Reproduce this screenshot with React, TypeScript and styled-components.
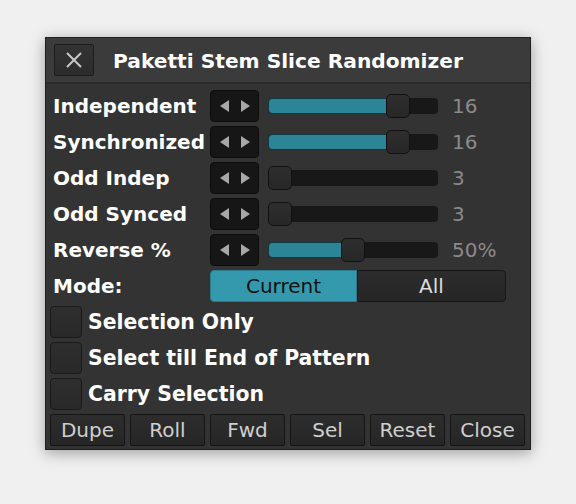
import React from 'react'
import styled, { createGlobalStyle } from 'styled-components'

const GlobalStyle = createGlobalStyle`
  html, body {
    margin: 0;
    padding: 0;
    background: #f0f0f0;
  }
  body {
    font-family: 'DejaVu Sans', 'Liberation Sans', sans-serif;
  }
`

const Page = styled.div`
  padding: 37px 0 0 45px;
  height: 504px;
  box-sizing: border-box;
`

const Window = styled.div`
  width: 486px;
  height: 413px;
  box-sizing: border-box;
  background: #333333;
  border: 1px solid #1f1f1f;
  box-shadow: 0 3px 14px rgba(0, 0, 0, 0.35);
  display: flex;
  flex-direction: column;
`

const TitleBar = styled.div`
  height: 46px;
  box-sizing: border-box;
  background: #3b3b3b;
  border-bottom: 2px solid #2a2a2a;
  display: flex;
  align-items: center;
  padding: 0 0 0 8px;
  gap: 19px;
`

const CloseBox = styled.div`
  width: 40px;
  height: 32px;
  box-sizing: border-box;
  background: linear-gradient(#333, #2c2c2c);
  border: 1px solid #1c1c1c;
  border-radius: 2px;
  display: flex;
  align-items: center;
  justify-content: center;
`

const Title = styled.div`
  color: #fff;
  font-weight: bold;
  font-size: 20.2px;
  margin-top: 1px;
`

const Content = styled.div`
  display: flex;
  flex-direction: column;
  gap: 4px;
  padding: 6px 4px 0 4px;
`

const Row = styled.div`
  display: flex;
  align-items: center;
  height: 32px;
`

const Label = styled.div`
  width: 160px;
  padding-left: 3px;
  box-sizing: border-box;
  color: #fff;
  font-weight: bold;
  font-size: 20px;
  white-space: nowrap;
`

const ArrowBox = styled.div`
  width: 49px;
  height: 32px;
  box-sizing: border-box;
  background: #161616;
  border: 1px solid #0c0c0c;
  border-radius: 4px;
  display: flex;
  align-items: center;
  justify-content: center;
  gap: 12px;
`

const Track = styled.div`
  position: relative;
  width: 170px;
  height: 16px;
  margin-left: 9px;
  background: #181818;
  border-radius: 4px;
`

const Fill = styled.div`
  position: absolute;
  left: 0;
  top: 0;
  bottom: 0;
  background: #2b8596;
  border: 1px solid #123a42;
  box-sizing: border-box;
  border-radius: 4px 0 0 4px;
`

const Thumb = styled.div`
  position: absolute;
  top: -4px;
  width: 24px;
  height: 24px;
  box-sizing: border-box;
  background: linear-gradient(#2e2e2e, #272727);
  border: 1px solid #111;
  border-radius: 5px;
`

const Value = styled.div`
  margin-left: 14px;
  color: #8a8a8a;
  font-size: 20px;
`

const Segmented = styled.div`
  display: flex;
  width: 296px;
  height: 32px;
`

const Segment = styled.div<{ $active?: boolean }>`
  flex: ${(p) => (p.$active ? '0 0 147px' : '1')};
  box-sizing: border-box;
  display: flex;
  align-items: center;
  justify-content: center;
  font-size: 20px;
  color: ${(p) => (p.$active ? '#111' : '#ddd')};
  background: ${(p) => (p.$active ? '#3499ac' : 'linear-gradient(#2c2c2c, #262626)')};
  border: 1px solid ${(p) => (p.$active ? '#2a7b8b' : '#161616')};
  border-radius: ${(p) => (p.$active ? '4px 0 0 4px' : '0 4px 4px 0')};
`

const CheckRow = styled.div`
  display: flex;
  align-items: center;
  height: 32px;
  gap: 6px;
`

const CheckBox = styled.div`
  width: 32px;
  height: 32px;
  box-sizing: border-box;
  background: linear-gradient(#2e2e2e, #292929);
  border: 1px solid #1a1a1a;
  border-radius: 4px;
`

const CheckLabel = styled.div`
  color: #fff;
  font-weight: bold;
  font-size: 20.4px;
`

const ButtonRow = styled.div`
  display: flex;
  gap: 5px;
`

const Button = styled.div`
  width: 75px;
  height: 32px;
  box-sizing: border-box;
  background: linear-gradient(#2d2d2d, #262626);
  border: 1px solid #151515;
  border-radius: 2px;
  display: flex;
  align-items: center;
  justify-content: center;
  color: #cfcfcf;
  font-size: 20px;
`

const Arrows = () => (
  <>
    <svg width="9" height="12" viewBox="0 0 9 12">
      <polygon points="9,0 9,12 0,6" fill="#a8a8a8" />
    </svg>
    <svg width="9" height="12" viewBox="0 0 9 12">
      <polygon points="0,0 0,12 9,6" fill="#a8a8a8" />
    </svg>
  </>
)

const sliders = [
  { label: 'Independent', frac: 0.81, value: '16' },
  { label: 'Synchronized', frac: 0.81, value: '16' },
  { label: 'Odd Indep', frac: 0, value: '3' },
  { label: 'Odd Synced', frac: 0, value: '3' },
  { label: 'Reverse %', frac: 0.5, value: '50%' },
]

const checks = ['Selection Only', 'Select till End of Pattern', 'Carry Selection']
const buttons = ['Dupe', 'Roll', 'Fwd', 'Sel', 'Reset', 'Close']

const App: React.FC = () => {
  return (
    <Page>
      <GlobalStyle />
      <Window>
        <TitleBar>
          <CloseBox>
            <svg width="18" height="18" viewBox="0 0 18 18">
              <path d="M2 2 L16 16 M16 2 L2 16" stroke="#c8c8c8" strokeWidth="2" />
            </svg>
          </CloseBox>
          <Title>Paketti Stem Slice Randomizer</Title>
        </TitleBar>
        <Content>
          {sliders.map((s) => {
            const left = Math.round(s.frac * 146)
            return (
              <Row key={s.label}>
                <Label>{s.label}</Label>
                <ArrowBox>
                  <Arrows />
                </ArrowBox>
                <Track>
                  {left > 0 && <Fill style={{ width: left + 12 }} />}
                  <Thumb style={{ left }} />
                </Track>
                <Value>{s.value}</Value>
              </Row>
            )
          })}
          <Row>
            <Label>Mode:</Label>
            <Segmented>
              <Segment $active>Current</Segment>
              <Segment>All</Segment>
            </Segmented>
          </Row>
          {checks.map((c) => (
            <CheckRow key={c}>
              <CheckBox />
              <CheckLabel>{c}</CheckLabel>
            </CheckRow>
          ))}
          <ButtonRow>
            {buttons.map((b) => (
              <Button key={b}>{b}</Button>
            ))}
          </ButtonRow>
        </Content>
      </Window>
    </Page>
  )
}

export default App
